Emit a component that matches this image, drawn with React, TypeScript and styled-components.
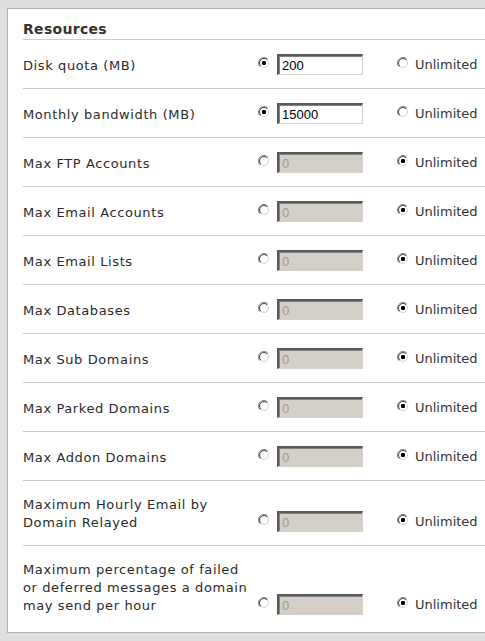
import React from 'react';
import styled, { createGlobalStyle } from 'styled-components';

interface Limit {
  label: string;
  value: string;
  unlimited: boolean;
}

const limits: Limit[] = [
  { label: 'Disk quota (MB)', value: '200', unlimited: false },
  { label: 'Monthly bandwidth (MB)', value: '15000', unlimited: false },
  { label: 'Max FTP Accounts', value: '0', unlimited: true },
  { label: 'Max Email Accounts', value: '0', unlimited: true },
  { label: 'Max Email Lists', value: '0', unlimited: true },
  { label: 'Max Databases', value: '0', unlimited: true },
  { label: 'Max Sub Domains', value: '0', unlimited: true },
  { label: 'Max Parked Domains', value: '0', unlimited: true },
  { label: 'Max Addon Domains', value: '0', unlimited: true },
  { label: 'Maximum Hourly Email by Domain Relayed', value: '0', unlimited: true },
  { label: 'Maximum percentage of failed or deferred messages a domain may send per hour', value: '0', unlimited: true },
];

const GlobalStyle = createGlobalStyle`
  html, body {
    margin: 0;
    padding: 0;
    background: #dedede;
    overflow: hidden;
  }
  body {
    font-family: "DejaVu Sans", Verdana, sans-serif;
  }
`;

const Page = styled.div`
  padding: 8px 0 0 7px;
`;

const Panel = styled.div`
  width: 520px;
  background: #ffffff;
  border: 1px solid #b0b0b0;
  padding: 0 0 4px 15px;
`;

const Heading = styled.h3`
  margin: 0;
  padding: 13px 0 2px 0;
  font-size: 14px;
  line-height: 15px;
  font-weight: bold;
  letter-spacing: 0.3px;
  color: #333333;
  border-bottom: 1px solid #cccccc;
`;

const Row = styled.div<{ $last?: boolean }>`
  display: grid;
  grid-template-columns: 235px auto;
  align-items: end;
  padding: 14px 0 13px 0;
  border-bottom: ${(p) => (p.$last ? 'none' : '1px solid #cccccc')};
`;

const Label = styled.div`
  padding: 1px 8px 0 0;
  font-size: 13px;
  line-height: 18px;
  letter-spacing: 0.6px;
  color: #2b2b2b;
`;

const Controls = styled.div`
  display: flex;
  align-items: center;
  height: 21px;
`;

const Option = styled.label<{ $gap: number }>`
  display: flex;
  align-items: center;
  gap: ${(p) => p.$gap}px;
  margin-right: 34px;
  font-size: 13px;
  color: #333333;
  &:last-child {
    margin-right: 0;
  }
`;

const RadioWrap = styled.span`
  display: inline-flex;
  width: 12px;
  height: 12px;
  margin-top: -3px;
`;

const TextBox = styled.input<{ $disabled?: boolean }>`
  box-sizing: border-box;
  width: 86px;
  height: 21px;
  margin: 0;
  padding: 1px 3px 0 3px;
  font-family: "Liberation Sans", Arial, sans-serif;
  font-size: 13px;
  color: ${(p) => (p.$disabled ? '#9a9a9a' : '#000000')};
  background: ${(p) => (p.$disabled ? '#d4d0c8' : '#ffffff')};
  border-style: solid;
  border-width: 2px 1px 1px 2px;
  border-color: #5a5a5a #d4d0c8 #d4d0c8 #5a5a5a;
  box-shadow: inset 1px 1px 0 #808080;
  outline: none;
`;

const Radio = ({ checked }: { checked: boolean }) => (
  <RadioWrap>
    <svg width="12" height="12" viewBox="0 0 12 12">
      <defs>
        <linearGradient id="rOuter" x1="0" y1="0" x2="1" y2="1">
          <stop offset="0.45" stopColor="#808080" />
          <stop offset="0.55" stopColor="#ffffff" />
        </linearGradient>
        <linearGradient id="rInner" x1="0" y1="0" x2="1" y2="1">
          <stop offset="0.45" stopColor="#404040" />
          <stop offset="0.55" stopColor="#d4d0c8" />
        </linearGradient>
      </defs>
      <circle cx="6" cy="6" r="5.5" fill="none" stroke="url(#rOuter)" strokeWidth="1" />
      <circle cx="6" cy="6" r="4.5" fill="#ffffff" stroke="url(#rInner)" strokeWidth="1" />
      {checked && <rect x="4" y="4" width="4" height="4" rx="1.2" fill="#000000" />}
    </svg>
  </RadioWrap>
);

const App = () => (
  <>
    <GlobalStyle />
    <Page>
      <Panel>
        <Heading>Resources</Heading>
        {limits.map((item, idx) => (
          <Row key={item.label} $last={idx === limits.length - 1}>
            <Label>{item.label}</Label>
            <Controls>
              <Option $gap={7}>
                <Radio checked={!item.unlimited} />
                <TextBox
                  readOnly
                  value={item.value}
                  $disabled={item.unlimited}
                />
              </Option>
              <Option $gap={6}>
                <Radio checked={item.unlimited} />
                Unlimited
              </Option>
            </Controls>
          </Row>
        ))}
      </Panel>
    </Page>
  </>
);

export default App;
